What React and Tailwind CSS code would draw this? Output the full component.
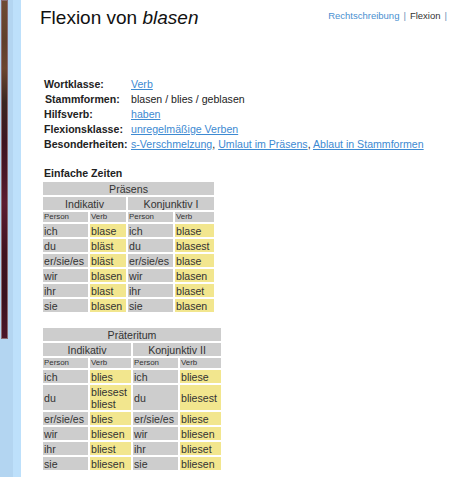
import React from "react";

const font = { fontFamily: '"Liberation Sans", Arial, sans-serif' };

const praesens = [
  ["ich", ["blase"], "ich", ["blase"]],
  ["du", ["bläst"], "du", ["blasest"]],
  ["er/sie/es", ["bläst"], "er/sie/es", ["blase"]],
  ["wir", ["blasen"], "wir", ["blasen"]],
  ["ihr", ["blast"], "ihr", ["blaset"]],
  ["sie", ["blasen"], "sie", ["blasen"]],
];

const praeteritum = [
  ["ich", ["blies"], "ich", ["bliese"]],
  ["du", ["bliesest", "bliest"], "du", ["bliesest"]],
  ["er/sie/es", ["blies"], "er/sie/es", ["bliese"]],
  ["wir", ["bliesen"], "wir", ["bliesen"]],
  ["ihr", ["bliest"], "ihr", ["blieset"]],
  ["sie", ["bliesen"], "sie", ["bliesen"]],
];

function Table({ title, left, right, rows, widths }) {
  return (
    <table className="border-separate border-spacing-[2px] text-[#333] text-[10.6px] leading-[12px]">
      <tbody>
        <tr>
          <td colSpan={4} className="bg-[#cdcdcd] h-[13px] text-center p-0">
            {title}
          </td>
        </tr>
        <tr>
          <td colSpan={2} className="bg-[#cdcdcd] h-[13px] text-center p-0">
            {left}
          </td>
          <td colSpan={2} className="bg-[#cdcdcd] h-[13px] text-center p-0">
            {right}
          </td>
        </tr>
        <tr className="text-[7.9px] leading-[10px]">
          <td className="bg-[#cdcdcd] h-[10px] pl-[1px] py-0" style={{ width: widths[0] }}>Person</td>
          <td className="bg-[#cdcdcd] h-[10px] pl-[1px] py-0" style={{ width: widths[1] }}>Verb</td>
          <td className="bg-[#cdcdcd] h-[10px] pl-[1px] py-0" style={{ width: widths[2] }}>Person</td>
          <td className="bg-[#cdcdcd] h-[10px] pl-[1px] py-0" style={{ width: widths[3] }}>Verb</td>
        </tr>
        {rows.map((r, i) => (
          <tr key={i}>
            <td className="bg-[#cdcdcd] pl-[1px] py-[0.5px]">{r[0]}</td>
            <td className="bg-[#f2e68e] pl-[1px] py-[0.5px]">
              {r[1].map((v, j) => (
                <div key={j}>{v}</div>
              ))}
            </td>
            <td className="bg-[#cdcdcd] pl-[1px] py-[0.5px]">{r[2]}</td>
            <td className="bg-[#f2e68e] pl-[1px] py-[0.5px]">
              {r[3].map((v, j) => (
                <div key={j}>{v}</div>
              ))}
            </td>
          </tr>
        ))}
      </tbody>
    </table>
  );
}

function Link({ children }) {
  return <a className="text-[#3d8ad2] underline underline-offset-[1px]">{children}</a>;
}

export default function App() {
  return (
    <div className="w-[452px] h-[479px] bg-white flex overflow-hidden" style={font}>
      <div className="w-[21px] h-[477px] flex shrink-0">
        <div className="w-[13px] bg-[#b3d5f1]">
          <div
            className="ml-[1px] w-[7px] h-[339px] border border-[#8a6a70]"
            style={{
              background:
                "linear-gradient(to bottom, #6e4b33 0%, #5f402c 12%, #6a4630 20%, #3a2721 30%, #3d1522 42%, #4a1728 52%, #5b1b30 60%, #3f1321 75%, #3a1220 88%, #4b1628 100%)",
            }}
          />
        </div>
        <div className="w-[8px] bg-[#bde0fb]" />
      </div>

      <div className="flex-1 flex flex-col">
        <div className="flex justify-between pl-[19px] pr-[5px]">
          <h1 className="pt-[7px] text-[19px] leading-[22px] text-[#111]">
            Flexion von <i>blasen</i>
          </h1>
          <div className="pt-[10px] text-[9.5px] leading-[11px] flex gap-[4px]">
            <span className="text-[#4a8fd0]">Rechtschreibung</span>
            <span className="text-[#6a8fb5]">|</span>
            <span className="text-[#333]">Flexion</span>
            <span className="text-[#6a8fb5]">|</span>
          </div>
        </div>

        <div className="mt-[48px] ml-[23px] grid grid-cols-[87px_1fr] text-[10.6px] leading-[15px] text-[#222]">
          <div className="font-bold">Wortklasse:</div>
          <div><Link>Verb</Link></div>
          <div className="font-bold pl-[1px]">Stammformen:</div>
          <div>blasen / blies / geblasen</div>
          <div className="font-bold">Hilfsverb:</div>
          <div><Link>haben</Link></div>
          <div className="font-bold">Flexionsklasse:</div>
          <div><Link>unregelmäßige Verben</Link></div>
          <div className="font-bold">Besonderheiten:</div>
          <div>
            <Link>s-Verschmelzung</Link>, <Link>Umlaut im Präsens</Link>, <Link>Ablaut in Stammformen</Link>
          </div>
        </div>

        <div className="mt-[14px] ml-[23px] font-bold text-[10.6px] leading-[14px] text-[#222]">
          Einfache Zeiten
        </div>

        <div className="ml-[20px]">
          <Table
            title="Präsens"
            left="Indikativ"
            right="Konjunktiv I"
            rows={praesens}
            widths={[45, 36, 45, 39]}
          />
          <div className="mt-[12px]">
            <Table
              title="Präteritum"
              left="Indikativ"
              right="Konjunktiv II"
              rows={praeteritum}
              widths={[45, 41, 45, 41]}
            />
          </div>
        </div>
      </div>
    </div>
  );
}
